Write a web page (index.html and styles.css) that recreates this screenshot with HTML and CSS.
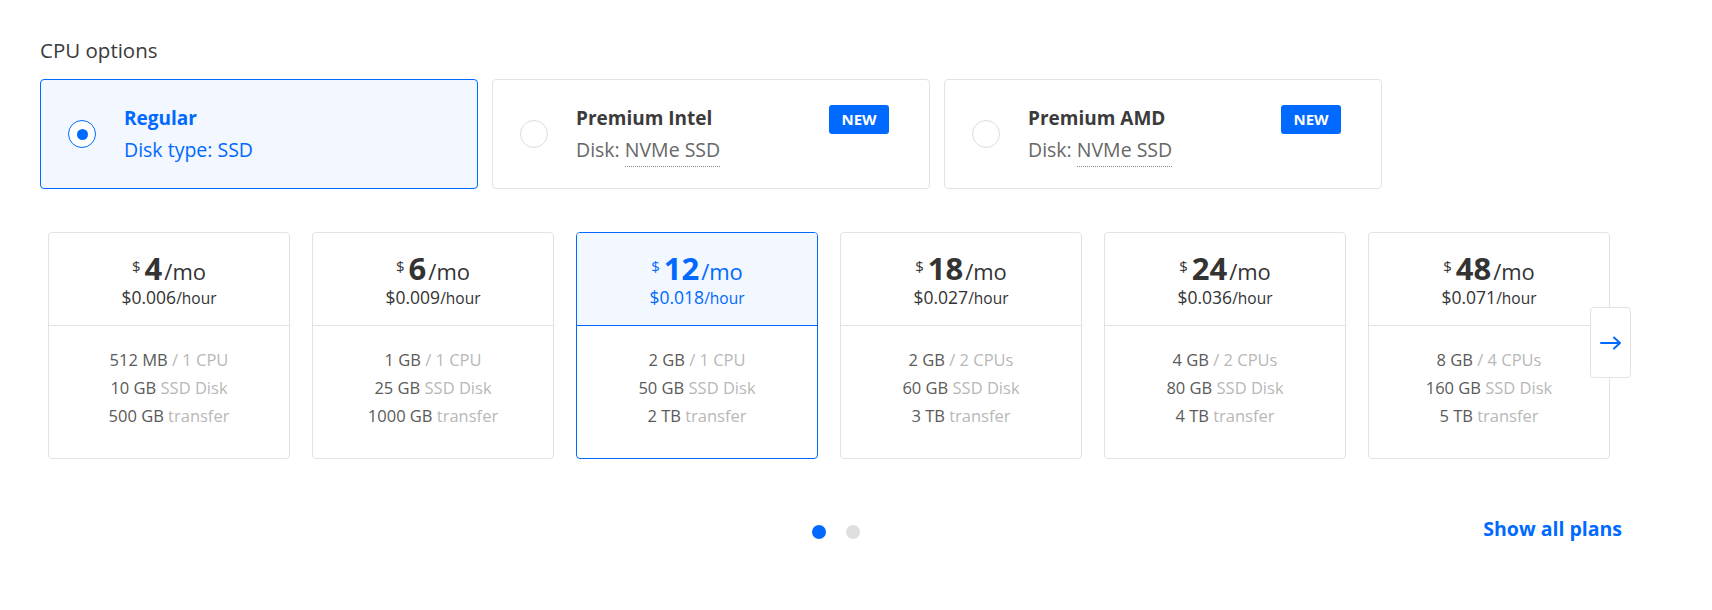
FILE: index.html
```html
<!DOCTYPE html>
<html lang="en">
<head>
<meta charset="utf-8">
<title>CPU options</title>
<link rel="stylesheet" href="styles.css">
</head>
<body>
<div class="page">
  <h2 class="heading">CPU options</h2>
  <div class="cpu-row">
    <div class="cpu-card selected">
      <span class="radio"><span class="radio-dot"></span></span>
      <div class="cpu-text">
        <div class="cpu-title">Regular</div>
        <div class="cpu-sub">Disk type: SSD</div>
      </div>
    </div>
    <div class="cpu-card">
      <span class="radio"></span>
      <div class="cpu-text">
        <div class="cpu-title">Premium Intel</div>
        <div class="cpu-sub">Disk: <span class="dotted">NVMe SSD</span></div>
      </div>
      <span class="badge">NEW</span>
    </div>
    <div class="cpu-card">
      <span class="radio"></span>
      <div class="cpu-text">
        <div class="cpu-title">Premium AMD</div>
        <div class="cpu-sub">Disk: <span class="dotted">NVMe SSD</span></div>
      </div>
      <span class="badge">NEW</span>
    </div>
  </div>

  <div class="plans">
    <div class="plan">
      <div class="plan-head">
        <div class="price"><span class="cur">$</span><span class="amt">4</span><span class="per">/mo</span></div>
        <div class="hourly">$0.006<span class="per-h">/hour</span></div>
      </div>
      <div class="plan-body">
        <div class="spec">512 MB <span class="lbl">/ 1 CPU</span></div>
        <div class="spec">10 GB <span class="lbl">SSD Disk</span></div>
        <div class="spec">500 GB <span class="lbl">transfer</span></div>
      </div>
    </div>
    <div class="plan">
      <div class="plan-head">
        <div class="price"><span class="cur">$</span><span class="amt">6</span><span class="per">/mo</span></div>
        <div class="hourly">$0.009<span class="per-h">/hour</span></div>
      </div>
      <div class="plan-body">
        <div class="spec">1 GB <span class="lbl">/ 1 CPU</span></div>
        <div class="spec">25 GB <span class="lbl">SSD Disk</span></div>
        <div class="spec">1000 GB <span class="lbl">transfer</span></div>
      </div>
    </div>
    <div class="plan selected">
      <div class="plan-head">
        <div class="price"><span class="cur">$</span><span class="amt">12</span><span class="per">/mo</span></div>
        <div class="hourly">$0.018<span class="per-h">/hour</span></div>
      </div>
      <div class="plan-body">
        <div class="spec">2 GB <span class="lbl">/ 1 CPU</span></div>
        <div class="spec">50 GB <span class="lbl">SSD Disk</span></div>
        <div class="spec">2 TB <span class="lbl">transfer</span></div>
      </div>
    </div>
    <div class="plan">
      <div class="plan-head">
        <div class="price"><span class="cur">$</span><span class="amt">18</span><span class="per">/mo</span></div>
        <div class="hourly">$0.027<span class="per-h">/hour</span></div>
      </div>
      <div class="plan-body">
        <div class="spec">2 GB <span class="lbl">/ 2 CPUs</span></div>
        <div class="spec">60 GB <span class="lbl">SSD Disk</span></div>
        <div class="spec">3 TB <span class="lbl">transfer</span></div>
      </div>
    </div>
    <div class="plan">
      <div class="plan-head">
        <div class="price"><span class="cur">$</span><span class="amt">24</span><span class="per">/mo</span></div>
        <div class="hourly">$0.036<span class="per-h">/hour</span></div>
      </div>
      <div class="plan-body">
        <div class="spec">4 GB <span class="lbl">/ 2 CPUs</span></div>
        <div class="spec">80 GB <span class="lbl">SSD Disk</span></div>
        <div class="spec">4 TB <span class="lbl">transfer</span></div>
      </div>
    </div>
    <div class="plan">
      <div class="plan-head">
        <div class="price"><span class="cur">$</span><span class="amt">48</span><span class="per">/mo</span></div>
        <div class="hourly">$0.071<span class="per-h">/hour</span></div>
      </div>
      <div class="plan-body">
        <div class="spec">8 GB <span class="lbl">/ 4 CPUs</span></div>
        <div class="spec">160 GB <span class="lbl">SSD Disk</span></div>
        <div class="spec">5 TB <span class="lbl">transfer</span></div>
      </div>
    </div>
    <button class="next" type="button" aria-label="Next">
      <svg width="22" height="14" viewBox="0 0 22 14"><path d="M1 7H20M14 1.5L20 7L14 12.5" fill="none" stroke="#0069ff" stroke-width="2" stroke-linecap="round" stroke-linejoin="round"/></svg>
    </button>
  </div>

  <div class="footer-row">
    <div></div>
    <div class="dots"><span class="dot active"></span><span class="dot"></span></div>
    <a class="show-all" href="#">Show all plans</a>
  </div>
</div>
</body>
</html>
```
FILE: styles.css
```css
* { box-sizing: border-box; }

body {
  margin: 0;
  background: #ffffff;
  font-family: "Open Sans", "Liberation Sans", sans-serif;
  color: #333333;
}

.page {
  width: 1632px;
  padding: 38px 0 0 40px;
}

.heading {
  margin: 0 0 17px;
  font-size: 20.5px;
  line-height: 24px;
  font-weight: 400;
  color: #3a3a3a;
}

.cpu-row {
  display: flex;
  gap: 14px;
}

.cpu-card {
  width: 438px;
  height: 110px;
  display: flex;
  align-items: center;
  padding: 0 40px 0 27px;
  border: 1px solid #e2e2e2;
  border-radius: 4px;
  background: #fff;
}

.cpu-card.selected {
  border-color: #0069ff;
  background: #f3f7ff;
}

.radio {
  width: 28px;
  height: 28px;
  flex: 0 0 28px;
  border: 1px solid #dcdcdc;
  border-radius: 50%;
  background: #fff;
  display: flex;
  align-items: center;
  justify-content: center;
}

.selected .radio {
  border-color: #0069ff;
}

.radio-dot {
  width: 11px;
  height: 11px;
  border-radius: 50%;
  background: #0069ff;
}

.cpu-text {
  flex: 1;
  margin-left: 28px;
}

.cpu-title {
  font-size: 19px;
  line-height: 24px;
  font-weight: 700;
  color: #3b3b3b;
}

.cpu-sub {
  margin-top: 8px;
  font-size: 19.5px;
  line-height: 24px;
  color: #676767;
}

.selected .cpu-title,
.selected .cpu-sub {
  color: #0069ff;
}

.dotted {
  padding-bottom: 3px;
  border-bottom: 1px dotted #8a8a8a;
}

.badge {
  align-self: flex-start;
  margin-top: 25px;
  width: 60px;
  height: 29px;
  border-radius: 3px;
  background: #0069ff;
  color: #fff;
  font-size: 15px;
  font-weight: 700;
  line-height: 29px;
  text-align: center;
}

/* Plans */
.plans {
  position: relative;
  display: flex;
  gap: 22px;
  margin-top: 43px;
  padding-left: 8px;
}

.plan {
  width: 242px;
  height: 227px;
  border: 1px solid #e2e2e2;
  border-radius: 4px;
  background: #fff;
  text-align: center;
  overflow: hidden;
}

.plan-head {
  height: 93px;
  padding-top: 17px;
  border-bottom: 1px solid #e2e2e2;
}

.price {
  font-size: 31px;
  line-height: 36px;
  color: #333;
}

.price span { line-height: 1; }

.cur {
  font-size: 15px;
  vertical-align: 8px;
  margin-right: 4px;
}

.amt {
  font-weight: 700;
}

.per {
  font-size: 22px;
  margin-left: 2px;
}

.hourly {
  font-size: 17.5px;
  line-height: 22px;
  color: #333;
}

.per-h {
  font-size: 15.5px;
}

.plan-body {
  padding-top: 20px;
}

.spec {
  font-size: 16.5px;
  line-height: 28px;
  color: #5a5a5a;
}

.lbl {
  color: #b8b8b8;
}

.plan.selected {
  border-color: #0069ff;
}

.plan.selected .plan-head {
  background: #f3f7ff;
  border-bottom-color: #0069ff;
}

.plan.selected .price,
.plan.selected .hourly {
  color: #0069ff;
}

.next {
  position: absolute;
  top: 75px;
  right: 1px;
  width: 41px;
  height: 71px;
  padding: 0;
  border: 1px solid #e2e2e2;
  border-radius: 4px;
  background: #fff;
  display: flex;
  align-items: center;
  justify-content: center;
  cursor: pointer;
}

/* Footer */
.footer-row {
  display: grid;
  grid-template-columns: 1fr auto 1fr;
  align-items: center;
  margin-top: 58px;
}

.dots {
  display: flex;
  gap: 20px;
  margin-top: 5px;
}

.dot {
  width: 14px;
  height: 14px;
  border-radius: 50%;
  background: #dfdfdf;
}

.dot.active {
  background: #0069ff;
}

.show-all {
  justify-self: end;
  margin-right: 10px;
  font-size: 19.5px;
  line-height: 24px;
  font-weight: 700;
  color: #0069ff;
  text-decoration: none;
}
```
